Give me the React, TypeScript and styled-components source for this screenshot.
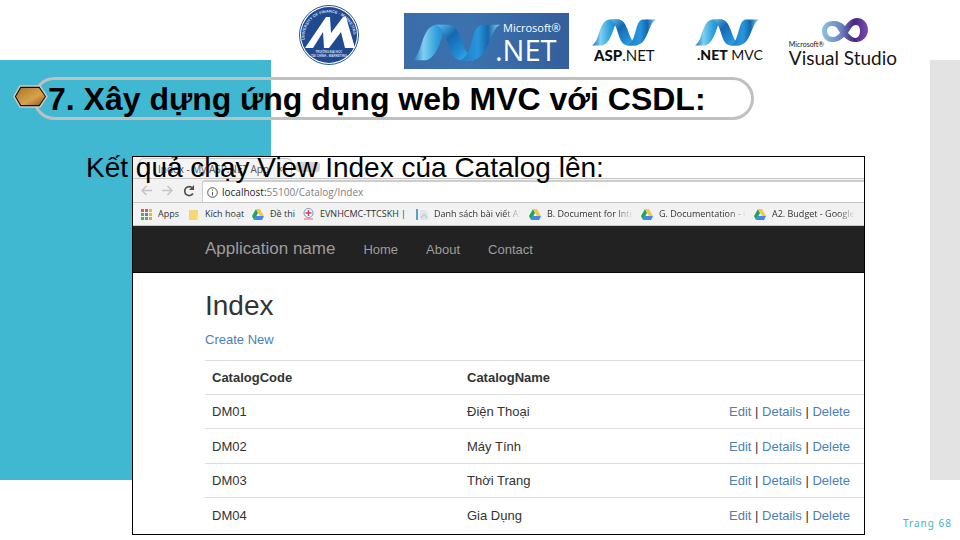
import React, { useId } from 'react';
import styled, { createGlobalStyle, css } from 'styled-components';

const GlobalStyle = createGlobalStyle`
  *, *::before, *::after { box-sizing: border-box; }
  body { margin: 0; background: #fff; font-family: "Liberation Sans", Arial, sans-serif; }
  a { color: #4a7fb8; text-decoration: none; }
`;

const Slide = styled.div`
  display: grid;
  grid-template-columns: minmax(0, 1fr);
  min-height: 100vh;
  background: #fff;
`;

const Backdrop = styled.div`
  grid-area: 1 / 1;
  display: grid;
  grid-template-columns: 271px 1fr 30px;
  padding: 60px 0;
`;

const Panel = styled.div<{ $tone: string; $column: number }>`
  grid-column: ${(p) => p.$column};
  background: ${(p) => p.$tone};
`;

const Content = styled.div`
  grid-area: 1 / 1;
  z-index: 1;
  display: flex;
  flex-direction: column;
`;

const LogoBar = styled.header`
  display: flex;
  align-items: flex-start;
  height: 77px;
  padding: 4px 40px 0 298px;
  > * { flex: none; }
`;

const NetBanner = styled.div`
  display: flex;
  width: 165px;
  height: 56px;
  margin: 9px 0 0 44px;
  padding: 8px 0 0 8px;
  background: linear-gradient(90deg, #3a6ca8, #3c72ae 40%, #335f9c);
  color: #fff;
  font-family: "Open Sans", "Noto Sans", sans-serif;
  svg { flex: none; margin-top: 3px; }
`;

const BannerText = styled.div`
  display: flex;
  flex-direction: column;
  margin-left: -5px;
  font-size: 11px;
  line-height: 14px;
  white-space: nowrap;
  span { padding-left: 8px; }
  strong { font-size: 29px; line-height: 30px; font-weight: 400; }
`;

const Product = styled.div<{ $gap: number; $size: number }>`
  display: flex;
  flex-direction: column;
  gap: 1px;
  margin: 15px 0 0 ${(p) => p.$gap}px;
  font: 400 ${(p) => p.$size}px/16px Lato, "Open Sans", sans-serif;
  color: #111;
  white-space: nowrap;
  strong { font-weight: 900; }
  span { padding-left: 2px; }
`;

const Studio = styled.div`
  display: flex;
  flex-direction: column;
  margin: 13px 0 0 26px;
  color: #161616;
  font-family: Lato, "Open Sans", sans-serif;
  white-space: nowrap;
`;

const StudioMark = styled.div`
  display: flex;
  align-items: flex-end;
  height: 31px;
  svg { align-self: flex-start; }
`;

const StudioMaker = styled.span`
  width: 32px;
  font-size: 7px;
  line-height: 8px;
`;

const StudioName = styled.span`
  font-size: 19px;
  line-height: 20px;
`;

const TitleRow = styled.div`
  display: flex;
  align-items: center;
  height: 43px;
  margin: 0 206px 0 13px;
`;

const Hexagon = styled.svg`
  flex: none;
  z-index: 1;
  margin-top: -4px;
`;

const TitlePill = styled.h1`
  flex: 1;
  height: 43px;
  margin: 0 0 0 -15px;
  padding-left: 12px;
  border: 3px solid #c0c0c0;
  border-radius: 22px;
  font-size: 32px;
  line-height: 38px;
  font-weight: 700;
  white-space: nowrap;
  color: #000;
`;

const Stage = styled.main`
  position: relative;
  margin: 36px 95px 0 132px;
`;

const Caption = styled.p`
  position: absolute;
  left: -46px;
  top: -4px;
  margin: 0;
  font-size: 28px;
  line-height: 32px;
  white-space: nowrap;
  color: #000;
`;

const Browser = styled.section`
  border: 1px solid #000;
  background: #fff;
`;

const TabStrip = styled.div`
  display: flex;
  align-items: flex-end;
  height: 22px;
  padding-left: 6px;
  border-bottom: 1px solid #c8c8c8;
  background: linear-gradient(90deg, #f0f0f0, #fff 200px);
`;

const Tab = styled.div`
  display: flex;
  align-items: center;
  gap: 8px;
  height: 20px;
  padding: 0 8px;
  border: 1px solid #c8c8c8;
  border-bottom: 0;
  border-radius: 5px 5px 0 0;
  background: #f4f4f4;
  font: 10px/18px "Open Sans", "Noto Sans", sans-serif;
  color: #555;
  white-space: nowrap;
`;

const TabMark = styled.i`
  width: 2px;
  height: 10px;
  background: #4a90c8;
`;

const NewTab = styled.button`
  width: 24px;
  height: 10px;
  margin: 0 0 6px 4px;
  padding: 0;
  border: 0;
  border-radius: 3px;
  background: #d4d4d4;
`;

const Toolbar = styled.div`
  display: flex;
  align-items: center;
  height: 24px;
  padding-left: 3px;
  border-bottom: 1px solid #c4c4c4;
  background: #f2f2f2;
`;

const IconButton = styled.button`
  display: flex;
  justify-content: center;
  width: 21px;
  padding: 0;
  border: 0;
  background: none;
`;

const AddressBar = styled.label`
  display: flex;
  flex: 1;
  align-items: center;
  gap: 4px;
  height: 22px;
  margin: 1px 0 0 3px;
  padding-left: 4px;
  border: 2px solid #cdcdcd;
  border-width: 2px 0 0 1px;
  border-radius: 3px 0 0 0;
  background: #fff;
`;

const AddressText = styled.div`
  font: 10px/16px "Open Sans", "Noto Sans", sans-serif;
  color: #808080;
  b { font-weight: 400; color: #222; }
`;

const Bookmarks = styled.nav`
  display: grid;
  grid-template-columns: 48px 63px 51px 113px 113px 112px 113px 1fr;
  align-items: center;
  height: 23px;
  padding-left: 8px;
  border-bottom: 1px solid #c8c8c8;
  background: #f2f2f2;
  overflow: hidden;
`;

const Bookmark = styled.a<{ $fade?: boolean }>`
  display: flex;
  align-items: center;
  gap: 6px;
  min-width: 0;
  padding-right: 8px;
  overflow: hidden;
  font: 9px/16px "Open Sans", "Noto Sans", sans-serif;
  color: #333;
  white-space: nowrap;
  svg { flex: none; }
  span {
    ${(p) => p.$fade && css`
      overflow: hidden;
      mask-image: linear-gradient(90deg, #000 80%, transparent);
    `}
  }
`;

const Navbar = styled.nav`
  display: flex;
  align-items: center;
  height: 47px;
  padding-left: 72px;
  border-bottom: 1px solid #080808;
  background: #222;
  font-size: 13px;
  a { color: #9d9d9d; margin-right: 28px; }
`;

const Brand = styled.a`
  font-size: 17px;
`;

const Page = styled.div`
  padding: 16px 0 2px 72px;
  color: #333;
  font-size: 13px;
`;

const PageTitle = styled.h2`
  margin: 0 0 8px;
  font-size: 28px;
  line-height: 34px;
  font-weight: 400;
`;

const CreateLink = styled.a`
  display: block;
  line-height: 18px;
  margin-bottom: 11px;
`;

const Table = styled.table`
  width: 100%;
  table-layout: fixed;
  border-collapse: separate;
  border-spacing: 0;
  th, td {
    height: 34px;
    padding: 0 7px;
    border-top: 1px solid #ddd;
    text-align: left;
    white-space: nowrap;
  }
  tr:nth-child(even) td { height: 35px; }
  th:nth-child(1) { width: 255px; }
  th:nth-child(3) { width: 142px; }
`;

const PageNumber = styled.footer`
  align-self: flex-end;
  margin: -20px 8px 0 0;
  font: 10px/16px "Noto Sans", sans-serif;
  letter-spacing: 1px;
  color: #40b4c8;
`;

function Ribbon({ width, height }: { width: number; height: number }) {
  const id = useId();
  return (
    <svg width={width} height={height} viewBox="0 0 62 26" preserveAspectRatio="none" aria-hidden="true">
      <defs>
        <linearGradient id={id + 'a'} x1="0" x2="1">
          <stop offset="0" stopColor="#1769b4" /><stop offset=".3" stopColor="#7fd0f0" /><stop offset=".65" stopColor="#2f9fdc" /><stop offset="1" stopColor="#1a78c4" />
        </linearGradient>
        <linearGradient id={id + 'b'} x1="0" x2="1" y2="1">
          <stop offset="0" stopColor="#5fc0ea" /><stop offset=".35" stopColor="#1668b0" /><stop offset=".7" stopColor="#1f8cd4" /><stop offset="1" stopColor="#56bdec" />
        </linearGradient>
        <linearGradient id={id + 'c'} x1="0" x2="1">
          <stop offset="0" stopColor="#1c7cc8" /><stop offset=".45" stopColor="#2796dc" /><stop offset=".7" stopColor="#1565ac" /><stop offset="1" stopColor="#8ad6f4" />
        </linearGradient>
      </defs>
      <path d="M0 25.500C8 21 6 2 17 .5h10C20 3 21 22 10 25.500z" fill={'url(#' + id + 'a)'} />
      <path d="M17 .5h9C36 2 34 20 44 25.500h-9C24 25.500 27 5 17 .5z" fill={'url(#' + id + 'b)'} />
      <path d="M34 25.500C44 21 41 2 49 .5h13C54 4 55 25.500 41 25.500z" fill={'url(#' + id + 'c)'} />
    </svg>
  );
}

function Emblem() {
  return (
    <svg width="62" height="62" viewBox="0 0 62 62" role="img" aria-label="University of Finance - Marketing">
      <defs>
        <path id="sealTop" d="M7.500 40A24.500 24.500 0 1 1 54.500 40" />
      </defs>
      <circle cx="31" cy="31" r="29.500" fill="#fff" stroke="#2b5596" />
      <circle cx="31" cy="31" r="28" fill="#1f4a90" />
      <text fontSize="4" fontWeight="700" fill="#d5def0" fontFamily="Liberation Sans, sans-serif">
        <textPath href="#sealTop" startOffset="4">UNIVERSITY OF FINANCE - MARKETING</textPath>
      </text>
      <path d="M7 44 28 13h4l1 16 12-16h3l9 31H47l-4-16-12 16h-5l-1-16-10 16z" fill="#fff" />
      <g fontSize="3" fontWeight="700" fill="#d5def0" textAnchor="middle" fontFamily="Liberation Sans, sans-serif">
        <text x="31" y="49">TRƯỜNG ĐẠI HỌC</text>
        <text x="31" y="53">TÀI CHÍNH - MARKETING</text>
      </g>
    </svg>
  );
}

function InfinityMark() {
  return (
    <svg width="47" height="27" viewBox="0 0 47 27" aria-hidden="true">
      <defs>
        <linearGradient id="loop" x1="0" x2="1"><stop offset="0" stopColor="#8cc4e0" /><stop offset=".4" stopColor="#6a86c0" /><stop offset=".7" stopColor="#4a2583" /><stop offset="1" stopColor="#7a4cb0" /></linearGradient>
      </defs>
      <path fillRule="evenodd" fill="url(#loop)" d="M12 4c6 0 9 2 12 5 3-4 7-8 12-8 7 0 11 6 11 12s-5 12-12 12c-5 0-9-2-12-5-3 3-7 5-12 5C5 25 1 20 1 14S6 4 12 4zm0 5c-4 0-6 2-6 5s2 6 6 6c3 0 5-2 7-4-2-4-4-7-7-7zm15 7c3 3 5 5 8 5 3-1 4-4 4-7s-1-6-4-6c-4 0-6 5-8 8z" />
    </svg>
  );
}

function Drive() {
  return (
    <svg width="12" height="11" viewBox="0 0 12 11" aria-hidden="true">
      <path d="M4 0 0 7l2 4 4-7z" fill="#1fa463" />
      <path d="M4 0h4l4 7H8z" fill="#fbc83c" />
      <path d="M4 7h8l-2 4H2z" fill="#4387f5" />
    </svg>
  );
}

function AppsGrid() {
  const tones = ['#e0574b', '#e0574b', '#e9b83a', '#4caf62', '#5080d8', '#e9b83a', '#4caf62', '#4caf62', '#e9a03a'];
  return (
    <svg width="11" height="11" viewBox="0 0 11 11" aria-hidden="true">
      {tones.map((tone, i) => <rect key={i} x={(i % 3) * 4} y={Math.floor(i / 3) * 4} width="3" height="3" fill={tone} />)}
    </svg>
  );
}

function Folder() {
  return <svg width="10" height="11" viewBox="0 0 10 11" aria-hidden="true"><path d="M0 1h9v10H0z" fill="#f7d774" /><path d="M8 7h2v4H8z" fill="#fae9b0" /></svg>;
}

function Power() {
  return (
    <svg width="11" height="12" viewBox="0 0 11 12" aria-hidden="true">
      <circle cx="5.500" cy="5" r="4.500" fill="#fff" stroke="#6c8fd0" />
      <path d="M5.500 2v6M2.500 5h6" stroke="#d04050" strokeWidth="1.500" />
      <path d="M1 11h9" stroke="#e06a6a" />
    </svg>
  );
}

function Sheet() {
  return <svg width="12" height="11" viewBox="0 0 12 11" aria-hidden="true"><path d="M0 0h2v11H0z" fill="#4ba3dc" /><path d="M4 1h5l3 3v7H4z" fill="#e0e3e8" /><path d="m5 9 3-4 3 4" fill="none" stroke="#b4bdc9" /></svg>;
}

const bookmarks = [
  { label: 'Apps', icon: <AppsGrid /> },
  { label: 'Kích hoạt', icon: <Folder /> },
  { label: 'Đề thi', icon: <Drive /> },
  { label: 'EVNHCMC-TTCSKH |', icon: <Power /> },
  { label: 'Danh sách bài viết AS', icon: <Sheet />, fade: true },
  { label: 'B. Document for Inter', icon: <Drive />, fade: true },
  { label: 'G. Documentation - G', icon: <Drive />, fade: true },
  { label: 'A2. Budget - Google', icon: <Drive />, fade: true },
];

const catalogs = [
  ['DM01', 'Điện Thoại'],
  ['DM02', 'Máy Tính'],
  ['DM03', 'Thời Trang'],
  ['DM04', 'Gia Dụng'],
];

export default function App() {
  return (
    <Slide>
      <GlobalStyle />
      <Backdrop>
        <Panel $tone="#40b8d2" $column={1} />
        <Panel $tone="#e3e3e3" $column={3} />
      </Backdrop>
      <Content>
        <LogoBar>
          <Emblem />
          <NetBanner>
            <Ribbon width={88} height={37} />
            <BannerText><span>Microsoft®</span><strong>.NET</strong></BannerText>
          </NetBanner>
          <Product $gap={23} $size={15}><Ribbon width={64} height={27} /><span><strong>ASP</strong>.NET</span></Product>
          <Product $gap={39} $size={14}><Ribbon width={64} height={27} /><span><strong>.NET</strong> MVC</span></Product>
          <Studio>
            <StudioMark>
              <StudioMaker>Microsoft®</StudioMaker>
              <InfinityMark />
            </StudioMark>
            <StudioName>Visual Studio</StudioName>
          </Studio>
        </LogoBar>
        <TitleRow>
          <Hexagon width="35" height="23" viewBox="0 0 35 23" aria-hidden="true">
            <defs><linearGradient id="gold" x1="0" x2="1" y2="1"><stop offset="0" stopColor="#a8742c" /><stop offset=".6" stopColor="#d9a24a" /><stop offset="1" stopColor="#8a5a1c" /></linearGradient></defs>
            <path d="M1 11.500 7 1h20l7 10.500L27 22H7z" fill="#111" stroke="#c8cdc8" strokeWidth="1.500" />
            <path d="M3 11.500 8 3h18l6 8.500-6 8.500H8z" fill="url(#gold)" />
          </Hexagon>
          <TitlePill>7. Xây dựng ứng dụng web MVC với CSDL:</TitlePill>
        </TitleRow>
        <Stage>
          <Browser>
            <TabStrip>
              <Tab><TabMark />Index - My ASP.NET App<span>×</span></Tab>
              <NewTab aria-label="New tab" />
            </TabStrip>
            <Toolbar>
              <IconButton aria-label="Back"><svg width="11" height="11" viewBox="0 0 11 11" fill="none" stroke="#c4c4c4" strokeWidth="1.500"><path d="M11 5.500H1M5.500 1 1 5.500 5.500 10" /></svg></IconButton>
              <IconButton aria-label="Forward"><svg width="11" height="11" viewBox="0 0 11 11" fill="none" stroke="#c4c4c4" strokeWidth="1.500"><path d="M0 5.500h10M5.500 1 10 5.500 5.500 10" /></svg></IconButton>
              <IconButton aria-label="Reload"><svg width="12" height="12" viewBox="0 0 12 12" fill="none" stroke="#505050" strokeWidth="1.700"><path d="M10 8.500A4.500 4.500 0 1 1 9.500 3" /><path d="M11 0v5H6z" fill="#505050" stroke="none" /></svg></IconButton>
              <AddressBar>
                <svg width="11" height="11" viewBox="0 0 11 11" fill="none" stroke="#555" aria-hidden="true"><circle cx="5.500" cy="5.500" r="4.800" /><path d="M5.500 5v3.500M5.500 2.500v1.300" /></svg>
                <AddressText><b>localhost:</b>55100/Catalog/Index</AddressText>
              </AddressBar>
            </Toolbar>
            <Bookmarks>
              {bookmarks.map((b) => <Bookmark key={b.label} href="#" $fade={b.fade}>{b.icon}<span>{b.label}</span></Bookmark>)}
            </Bookmarks>
            <Navbar>
              <Brand href="#">Application name</Brand>
              <a href="#">Home</a>
              <a href="#">About</a>
              <a href="#">Contact</a>
            </Navbar>
            <Page>
              <PageTitle>Index</PageTitle>
              <CreateLink href="#">Create New</CreateLink>
              <Table>
                <thead><tr><th>CatalogCode</th><th>CatalogName</th><th aria-label="Actions" /></tr></thead>
                <tbody>
                  {catalogs.map(([code, name]) => (
                    <tr key={code}>
                      <td>{code}</td><td>{name}</td>
                      <td><a href="#">Edit</a> | <a href="#">Details</a> | <a href="#">Delete</a></td>
                    </tr>
                  ))}
                </tbody>
              </Table>
            </Page>
          </Browser>
          <Caption>Kết quả chạy View Index của Catalog lên:</Caption>
        </Stage>
        <PageNumber>Trang 68</PageNumber>
      </Content>
    </Slide>
  );
}
